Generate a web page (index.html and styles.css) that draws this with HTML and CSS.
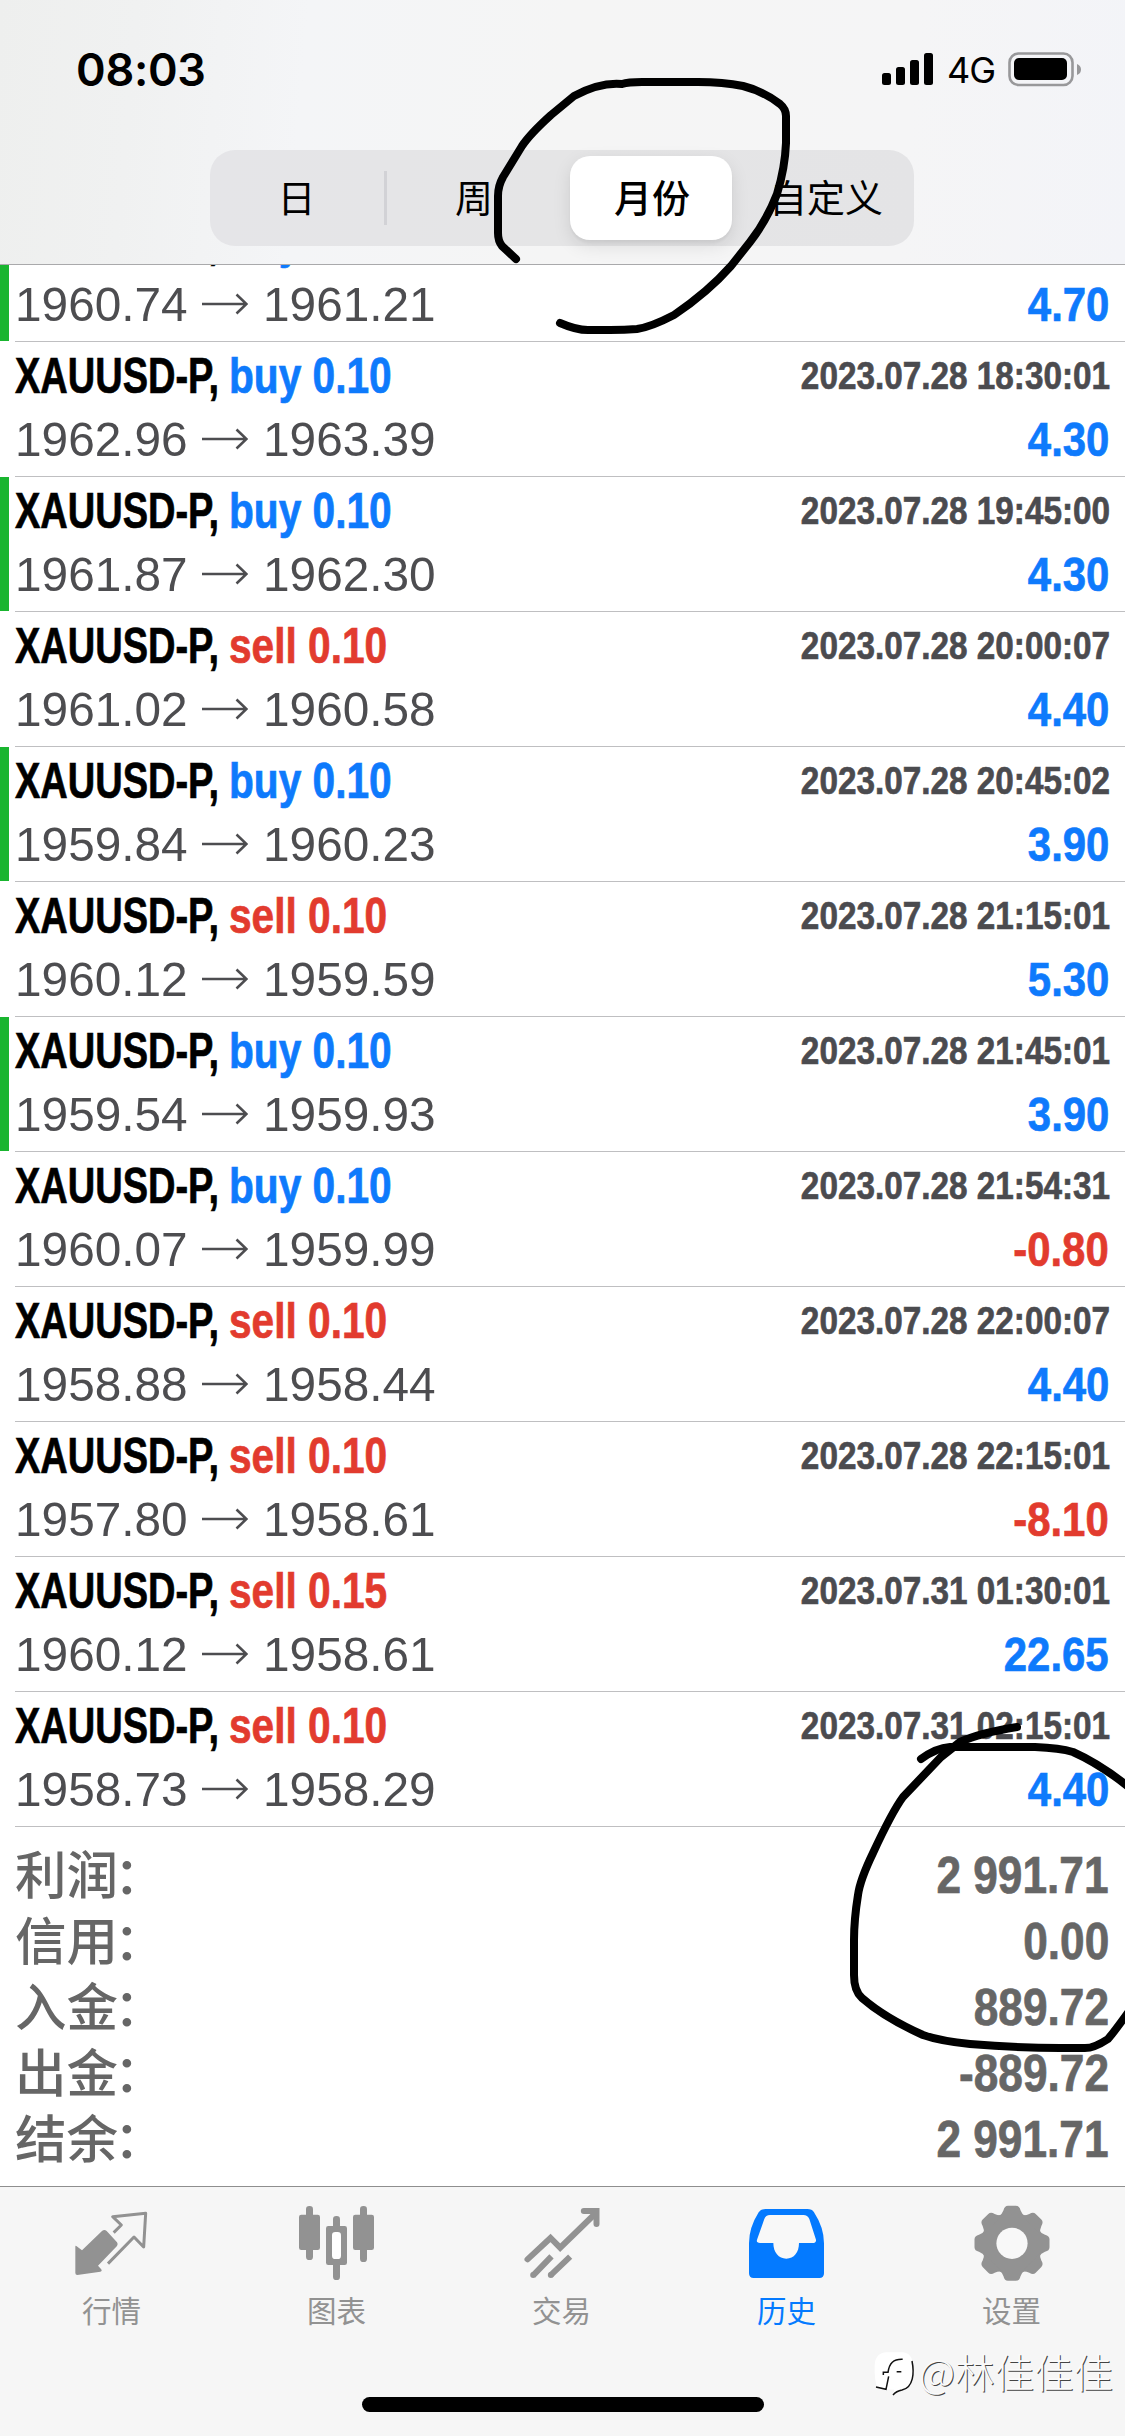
FILE: index.html
```html
<!DOCTYPE html>
<html lang="zh-CN">
<head>
<meta charset="utf-8">
<title>历史</title>
<link rel="stylesheet" href="styles.css">
</head>
<body>
<svg class="defs" width="0" height="0">
  <symbol id="arrow" viewBox="0 0 46 22"><path d="M0 11H44M34.500 1.500L44.500 11L34.500 20.500" fill="none" stroke="#4d4d50" stroke-width="2.600"/></symbol>
</svg>
<div class="screen">
  <header class="top">
    <div class="status">
      <time class="clock">08:03</time>
      <div class="indicators">
        <svg class="signal" width="51" height="33" viewBox="0 0 51 33"><rect x="0" y="20" width="9" height="12" rx="2.500"/><rect x="14" y="14" width="9" height="18" rx="2.500"/><rect x="28" y="7" width="9" height="25" rx="2.500"/><rect x="42" y="0" width="9" height="32" rx="2.500"/></svg>
        <span class="network">4G</span>
        <svg class="battery" width="74" height="35" viewBox="0 0 74 35"><rect x="1.500" y="1.500" width="63" height="31.500" rx="9" fill="none" stroke="#98989a" stroke-width="2.600"/><rect x="6" y="6" width="53" height="22" rx="5"/><path d="M69 12q4 1.500 4 5.500t-4 5.500z" fill="#98989a"/></svg>
      </div>
    </div>
    <nav class="segments">
      <span class="seg first">日</span>
      <span class="seg second">周</span>
      <span class="seg active">月份</span>
      <span class="seg">自定义</span>
    </nav>
  </header>

  <main class="history">
    <section class="deals">
      <article class="deal closed"><div class="line"><b class="symbol">XAUUSD-P,</b><b class="side buy">buy 0.10</b></div><div class="line prices"><span class="from">1960.74</span><svg class="arrow"><use href="#arrow"/></svg><span class="to">1961.21</span><b class="profit buy">4.70</b></div></article>
      <article class="deal"><div class="line"><b class="symbol">XAUUSD-P,</b><b class="side buy">buy 0.10</b><b class="date">2023.07.28 18:30:01</b></div><div class="line prices"><span class="from">1962.96</span><svg class="arrow"><use href="#arrow"/></svg><span class="to">1963.39</span><b class="profit buy">4.30</b></div></article>
      <article class="deal closed"><div class="line"><b class="symbol">XAUUSD-P,</b><b class="side buy">buy 0.10</b><b class="date">2023.07.28 19:45:00</b></div><div class="line prices"><span class="from">1961.87</span><svg class="arrow"><use href="#arrow"/></svg><span class="to">1962.30</span><b class="profit buy">4.30</b></div></article>
      <article class="deal"><div class="line"><b class="symbol">XAUUSD-P,</b><b class="side sell">sell 0.10</b><b class="date">2023.07.28 20:00:07</b></div><div class="line prices"><span class="from">1961.02</span><svg class="arrow"><use href="#arrow"/></svg><span class="to">1960.58</span><b class="profit buy">4.40</b></div></article>
      <article class="deal closed"><div class="line"><b class="symbol">XAUUSD-P,</b><b class="side buy">buy 0.10</b><b class="date">2023.07.28 20:45:02</b></div><div class="line prices"><span class="from">1959.84</span><svg class="arrow"><use href="#arrow"/></svg><span class="to">1960.23</span><b class="profit buy">3.90</b></div></article>
      <article class="deal"><div class="line"><b class="symbol">XAUUSD-P,</b><b class="side sell">sell 0.10</b><b class="date">2023.07.28 21:15:01</b></div><div class="line prices"><span class="from">1960.12</span><svg class="arrow"><use href="#arrow"/></svg><span class="to">1959.59</span><b class="profit buy">5.30</b></div></article>
      <article class="deal closed"><div class="line"><b class="symbol">XAUUSD-P,</b><b class="side buy">buy 0.10</b><b class="date">2023.07.28 21:45:01</b></div><div class="line prices"><span class="from">1959.54</span><svg class="arrow"><use href="#arrow"/></svg><span class="to">1959.93</span><b class="profit buy">3.90</b></div></article>
      <article class="deal"><div class="line"><b class="symbol">XAUUSD-P,</b><b class="side buy">buy 0.10</b><b class="date">2023.07.28 21:54:31</b></div><div class="line prices"><span class="from">1960.07</span><svg class="arrow"><use href="#arrow"/></svg><span class="to">1959.99</span><b class="profit sell">-0.80</b></div></article>
      <article class="deal"><div class="line"><b class="symbol">XAUUSD-P,</b><b class="side sell">sell 0.10</b><b class="date">2023.07.28 22:00:07</b></div><div class="line prices"><span class="from">1958.88</span><svg class="arrow"><use href="#arrow"/></svg><span class="to">1958.44</span><b class="profit buy">4.40</b></div></article>
      <article class="deal"><div class="line"><b class="symbol">XAUUSD-P,</b><b class="side sell">sell 0.10</b><b class="date">2023.07.28 22:15:01</b></div><div class="line prices"><span class="from">1957.80</span><svg class="arrow"><use href="#arrow"/></svg><span class="to">1958.61</span><b class="profit sell">-8.10</b></div></article>
      <article class="deal"><div class="line"><b class="symbol">XAUUSD-P,</b><b class="side sell">sell 0.15</b><b class="date">2023.07.31 01:30:01</b></div><div class="line prices"><span class="from">1960.12</span><svg class="arrow"><use href="#arrow"/></svg><span class="to">1958.61</span><b class="profit buy">22.65</b></div></article>
      <article class="deal"><div class="line"><b class="symbol">XAUUSD-P,</b><b class="side sell">sell 0.10</b><b class="date">2023.07.31 02:15:01</b></div><div class="line prices"><span class="from">1958.73</span><svg class="arrow"><use href="#arrow"/></svg><span class="to">1958.29</span><b class="profit buy">4.40</b></div></article>
    </section>
    <section class="summary">
      <div class="total"><span class="name">利润<i>：</i></span><b class="sum">2 991.71</b></div>
      <div class="total"><span class="name">信用<i>：</i></span><b class="sum">0.00</b></div>
      <div class="total"><span class="name">入金<i>：</i></span><b class="sum">889.72</b></div>
      <div class="total"><span class="name">出金<i>：</i></span><b class="sum">-889.72</b></div>
      <div class="total"><span class="name">结余<i>：</i></span><b class="sum">2 991.71</b></div>
    </section>
  </main>

  <footer class="tabbar">
    <nav class="tabs">
      <a class="tab"><svg width="90" height="95" viewBox="24 0 270 285"><path d="M49 153Q46 150 46 156V234Q46 240 52 240L121 230Q128 228 123 222L114 212L171 153Q175 147 171 142L140 108Q133 102 126 108L66 166Z" fill="#929292"/><path d="M161 113L184 90L158 65L257 55L251 156L222 126L144 206" fill="none" stroke="#929292" stroke-width="9" stroke-linejoin="round"/></svg><span>行情</span></a>
      <a class="tab"><svg width="90" height="95" viewBox="699 0 270 285" fill="#929292"><rect x="738" y="33" width="21" height="162" rx="10"/><rect x="717" y="59" width="63" height="106" rx="7"/><rect x="900" y="33" width="21" height="168" rx="10"/><rect x="879" y="59" width="63" height="106" rx="7"/><rect x="819" y="63" width="21" height="192" rx="10"/><rect x="798" y="93" width="63" height="117" rx="7"/><rect x="816" y="111" width="27" height="81" rx="10" fill="#fff"/></svg><span>图表</span></a>
      <a class="tab"><svg width="90" height="95" viewBox="22.500 0 270 285" fill="none" stroke="#929292" stroke-width="18"><path d="M51 193L120 129L149 158L250 60" stroke-linecap="round"/><path d="M220 48H258V87" stroke-linecap="round"/><path d="M68 241L123 184M120 241L179 185"/><g fill="#929292" stroke="none"><circle cx="68" cy="240" r="9"/><circle cx="121" cy="240" r="9"/></g></svg><span>交易</span></a>
      <a class="tab active"><svg width="90" height="95" viewBox="699 0 270 285"><path d="M767 42H892Q906 42 912 52Q942 98 942 145V235Q942 249 928 249H731Q717 249 717 235V145Q717 98 746 52Q753 42 767 42Z" fill="#047aff"/><path d="M780 60H880Q893 60 898 72L918 134Q919 144 908 144H867C867 172 852 191 829 191S790 172 790 144H750Q738 144 741 134L763 72Q767 60 780 60Z" fill="#f8f8f8"/></svg><span>历史</span></a>
      <a class="tab"><svg width="90" height="95" viewBox="-44 -48.300 90 95" fill="#929292"><defs><path id="tooth" d="M-13 -27Q-10 -29 -8.500 -33Q-7.500 -37.500 -4 -37.500H4Q7.500 -37.500 8.500 -33Q10 -29 13 -27Z"/></defs><circle r="30.500"/><use href="#tooth"/><use href="#tooth" transform="rotate(45)"/><use href="#tooth" transform="rotate(90)"/><use href="#tooth" transform="rotate(135)"/><use href="#tooth" transform="rotate(180)"/><use href="#tooth" transform="rotate(225)"/><use href="#tooth" transform="rotate(270)"/><use href="#tooth" transform="rotate(315)"/><circle r="15.600" fill="#f8f8f8"/></svg><span>设置</span></a>
    </nav>
    <div class="home-indicator"></div>
  </footer>

  <div class="watermark">
    <svg width="42" height="48" viewBox="0 0 126 144"><path d="M38 10H84Q116 12 116 48V78Q114 118 84 124Q68 126 58 138L61 122L40 121L8 112Q2 90 2 70V48Q4 12 38 10Z" fill="#fff"/><path d="M114 36C121 70 119 116 84 123Q67 126 57 138M6 114L36 121L44 82M28 78V70H42C46 42 58 30 86 31M68 68H82" fill="none" stroke="#111" stroke-width="4.500"/></svg>
    <span>@林佳佳佳</span>
  </div>

  <svg class="ink" width="1125" height="2436" viewBox="0 0 1125 2436">
    <path d="M516 259L502 246Q498 241 498 233V196Q498 186 503 177L522 146Q530 134 551 115L574 96Q600 82 622 84Q628 82 642 82H698Q723 82 743 86Q763 91 780 104Q786 109 786 116V143Q785 168 777 194Q767 220 750 242L731 266Q708 292 674 315Q651 327 637 329Q625 330 610 330H588Q576 330 560 323"/>
    <path d="M1017 1727Q980 1733 960 1742L941 1757L903 1797Q892 1812 873 1853Q860 1880 858 1895Q854 1920 854 1940V1975Q854 1991 862 1998Q885 2018 923 2035Q940 2041 970 2044Q1020 2048 1060 2048H1083Q1093 2049 1108 2039Q1114 2032 1127 2014"/>
    <path d="M921 1759Q936 1748 950 1747H1035Q1060 1748 1073 1752Q1100 1764 1130 1788"/>
  </svg>
</div>
</body>
</html>
```
FILE: styles.css
```css
* { box-sizing: border-box; }

body {
  margin: 0;
  background: #fff;
  font-family: "Liberation Sans", "Noto Sans CJK SC", sans-serif;
}

.defs { position: absolute; }

.screen {
  position: relative;
  display: flex;
  flex-direction: column;
  width: 1125px;
  height: 2436px;
  overflow: hidden;
  background: #fff;
}

/* Header */
.top {
  height: 265px;
  flex: none;
  border-bottom: 1px solid #a9a9ab;
  background: linear-gradient(95deg, #eeefee 0%, #f0f1f1 12%, #f4f5f7 27%, #f5f5f5 50%, #f5f5f6 80%, #f3f4f8 100%);
}

.status {
  display: flex;
  justify-content: space-between;
  align-items: center;
  height: 138px;
  padding: 0 43px 0 76px;
}

.clock {
  font: 600 45px/1 Inter, sans-serif;
  letter-spacing: -0.3px;
}

.indicators { display: flex; align-items: center; }

.network {
  width: 50px;
  margin: 2px 11px 0 14px;
  font: 400 36px/1 Inter, sans-serif;
  letter-spacing: -1px;
}

.segments {
  display: grid;
  grid-template-columns: repeat(4, 176px);
  width: 704px;
  height: 96px;
  margin: 12px 0 0 210px;
  border-radius: 25px;
  background: linear-gradient(90deg, #e5e5e8, #e5e5e6 50%, #e4e4e6);
}

.seg {
  display: flex;
  align-items: center;
  justify-content: center;
  padding-bottom: 5px;
  font: 400 38px/1 "Noto Sans CJK SC", sans-serif;
}

.seg.first { padding-right: 3px; }
.seg.second { position: relative; }

.seg.second::before {
  content: "";
  position: absolute;
  left: -2px;
  top: 21px;
  width: 3px;
  height: 54px;
  background: #d2d2d6;
}

.seg.active {
  width: 162px;
  height: 84px;
  margin: 6px 0 0 8px;
  padding-left: 2px;
  border-radius: 20px;
  background: #fff;
  font-weight: 500;
  box-shadow: 0 6px 18px rgba(0, 0, 0, 0.1), 0 3px 3px rgba(0, 0, 0, 0.04);
}

/* Deal rows */
.history { flex: 1; min-height: 0; overflow: hidden; }
.deals { margin-top: -58px; }

.deal {
  height: 135px;
  padding: 3px 15px 0;
  background: linear-gradient(#bfbfc1, #bfbfc1) 15px 100% / 100% 1px no-repeat;
}

.deal.closed {
  background:
    linear-gradient(#19b52f, #19b52f) 0 0 / 9px 134px no-repeat,
    linear-gradient(#bfbfc1, #bfbfc1) 15px 100% / 100% 1px no-repeat;
}

.line {
  display: flex;
  align-items: center;
  height: 62px;
  font-size: 50px;
  line-height: 62px;
  white-space: nowrap;
}

.line b, .sum { -webkit-text-stroke: 0.7px currentColor; }

.symbol { width: 214px; transform: scaleX(0.76); transform-origin: left; }
.side { width: 200px; transform: scaleX(0.813); transform-origin: left; }
.buy { color: #0e7afc; }
.sell { color: #e23b2e; }

.date {
  margin-left: auto;
  font-size: 39px;
  color: #4b4b4f;
  transform: scaleX(0.854);
  transform-origin: right;
}

.prices {
  height: 64px;
  line-height: 64px;
  font-size: 49px;
  color: #4d4d50;
}

.from { width: 187px; transform: scaleX(0.975); transform-origin: left; }
.to { transform: scaleX(0.975); transform-origin: left; }
.arrow { width: 46px; height: 22px; margin: 0 15px 0 0; }
.profit { margin: 0 1px 0 auto; transform: scaleX(0.855); transform-origin: right; }

/* Totals */
.summary { padding: 15px 15px 0; color: #666; }

.total {
  display: flex;
  justify-content: space-between;
  height: 66px;
  line-height: 67px;
}

.name {
  height: 66px;
  font: 500 51.500px/60px "Noto Sans CJK SC", sans-serif;
}

.name i { margin-left: -4px; font-style: normal; }

.sum { margin-right: 1px; font-size: 51px; transform: scaleX(0.867); transform-origin: right; }

/* Tab bar */
.tabbar {
  flex: none;
  height: 250px;
  border-top: 1px solid #8e8e8e;
  background: #f6f6f6;
}

.tabs { display: grid; grid-template-columns: repeat(5, 225px); padding-top: 8px; }

.tab {
  display: flex;
  flex-direction: column;
  align-items: center;
  height: 202px;
  color: #929292;
  font: 400 29.500px/38px "Noto Sans CJK SC", sans-serif;
}

.tab span { margin-right: 2px; }

.tab.active { color: #047aff; }

.home-indicator {
  width: 402px;
  height: 15px;
  margin: 0 auto;
  border-radius: 8px;
  background: #000;
}

/* Overlays */
.watermark {
  position: absolute;
  left: 874px;
  top: 2349px;
  display: flex;
  align-items: flex-start;
}

.watermark span {
  margin-left: 3px;
  color: #fafafa;
  font: 300 39.500px/43px "Noto Sans CJK SC", sans-serif;
  text-shadow: 1px 1px 0 #444;
}

.ink {
  position: absolute;
  left: 0;
  top: 0;
  fill: none;
  stroke: #000;
  stroke-width: 8;
  stroke-linecap: round;
  stroke-linejoin: round;
}
```
